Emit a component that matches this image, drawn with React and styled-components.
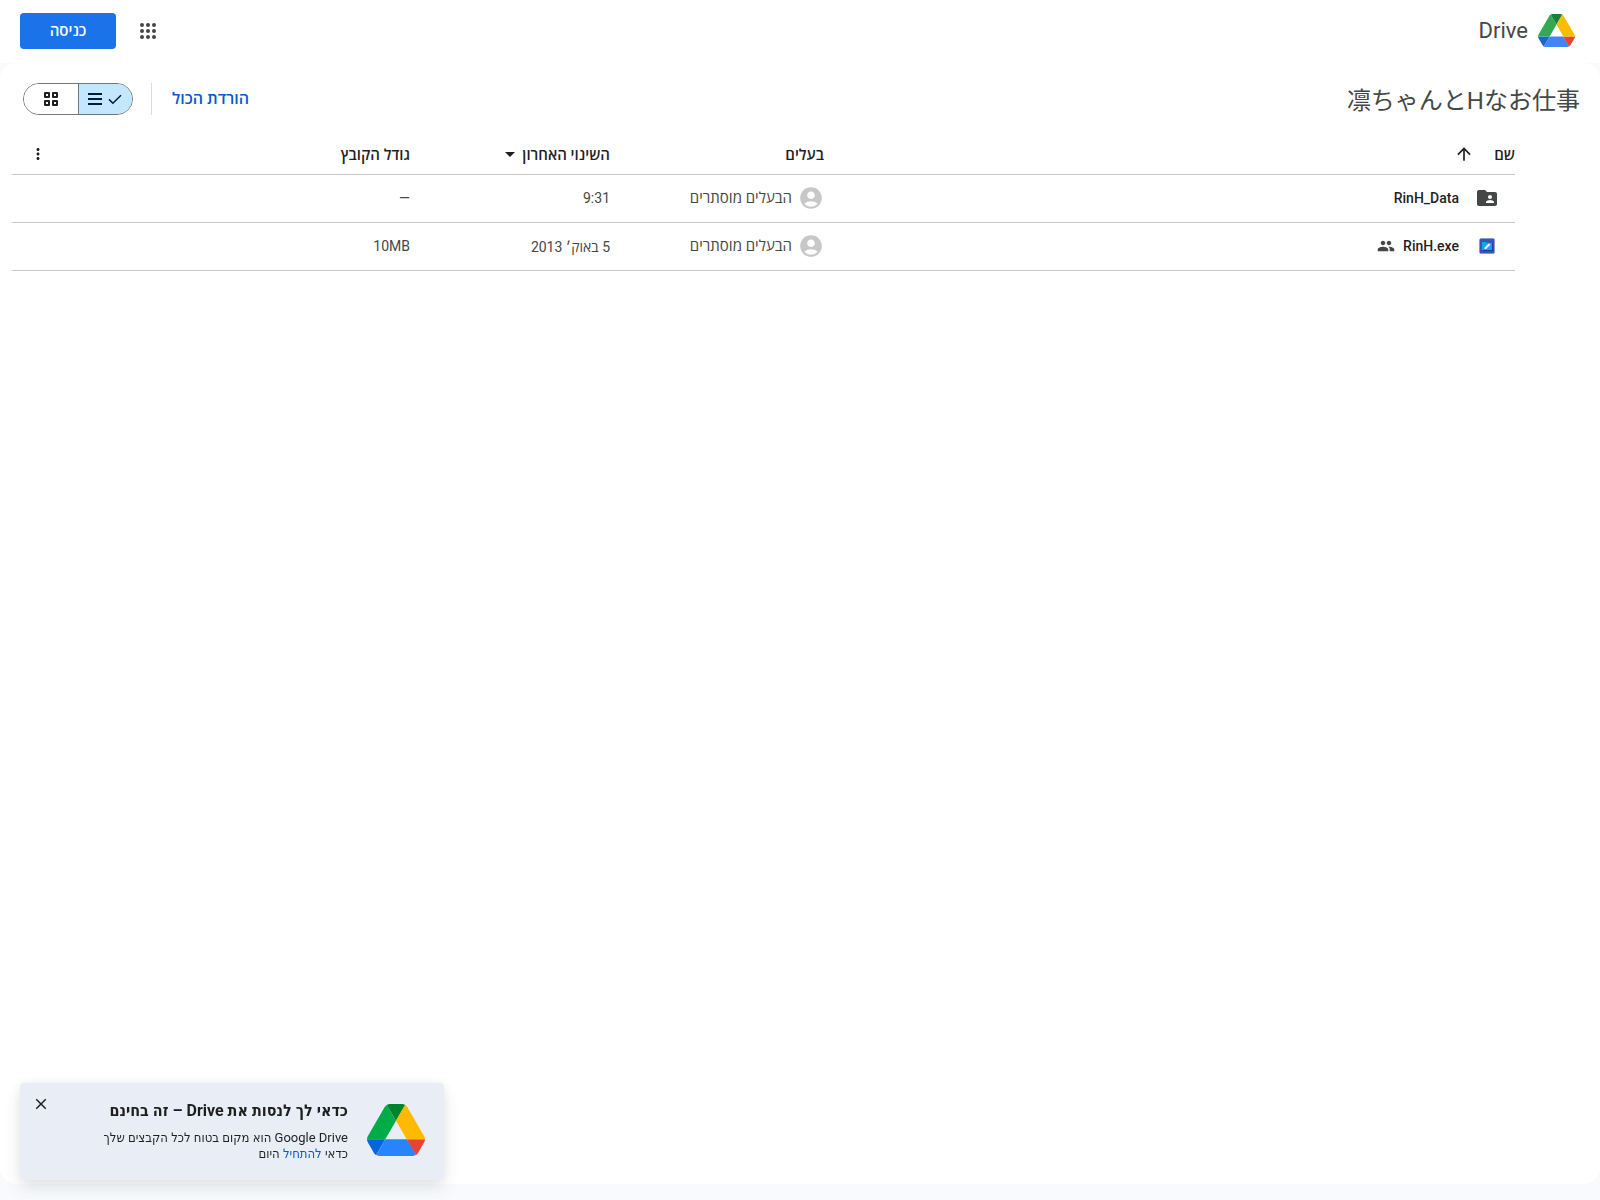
import React from 'react';
import styled, { createGlobalStyle, css } from 'styled-components';
import {
  MdAccountCircle,
  MdArrowDropDown,
  MdArrowUpward,
  MdClose,
  MdFolderShared,
  MdMoreVert,
  MdPeople,
} from 'react-icons/md';

const GlobalStyle = createGlobalStyle`
  * { box-sizing: border-box; }
  body {
    margin: 0;
    background: #f8fafd;
    color: #1f1f1f;
    font-family: Roboto, "Open Sans", "Noto Sans CJK JP", sans-serif;
  }
  button { font-family: inherit; cursor: pointer; }
  svg { display: block; flex: none; }
`;

const Page = styled.div`
  min-height: 100vh;
  display: flex;
  flex-direction: column;
  padding-bottom: 16px;
`;

const Header = styled.header`
  display: flex;
  align-items: center;
  justify-content: space-between;
  height: 63px;
  padding: 0 25px 2px 20px;
  background: #fff;
`;

const Brand = styled.a`
  display: flex;
  align-items: center;
  gap: 10px;
  color: #444746;
  font-size: 22px;
  line-height: 32px;
  text-decoration: none;
`;

const HeaderActions = styled.div`
  display: flex;
  align-items: center;
  gap: 12px;
`;

const IconButton = styled.button`
  display: flex;
  align-items: center;
  justify-content: center;
  width: ${({ $size }) => $size}px;
  height: ${({ $size }) => $size}px;
  padding: 0;
  border: 0;
  border-radius: 50%;
  background: transparent;
  color: ${({ $color }) => $color || '#1f1f1f'};
`;

const SignIn = styled.button`
  width: 96px;
  height: 36px;
  padding: 0 0 2px;
  border: 0;
  border-radius: 4px;
  background: #1a73e8;
  color: #fff;
  font-size: 15px;
  font-weight: 600;
`;

const Main = styled.main`
  flex: 1;
  border-radius: 16px;
  background: #fff;
`;

const Toolbar = styled.div`
  display: flex;
  align-items: center;
  justify-content: space-between;
  height: 72px;
  padding: 0 20px 0 23px;
`;

const Title = styled.h1`
  margin: 0;
  padding-top: 4px;
  color: #444746;
  font-size: 24px;
  font-weight: 400;
  line-height: 32px;
`;

const ToolbarActions = styled.div`
  display: flex;
  align-items: center;
`;

const DownloadAll = styled.button`
  height: 32px;
  padding: 0 20px 2px;
  border: 0;
  background: transparent;
  color: #0b57d0;
  font-size: 16px;
  font-weight: 600;
`;

const Divider = styled.span`
  width: 1px;
  height: 32px;
  margin-left: 18px;
  background: #dadce0;
`;

const Toggle = styled.div`
  display: flex;
  width: 110px;
  height: 32px;
  border: 1px solid #747775;
  border-radius: 16px;
  overflow: hidden;
`;

const ToggleButton = styled.button`
  flex: 1;
  display: flex;
  align-items: center;
  justify-content: center;
  gap: 6px;
  padding: 0;
  border: 0;
  background: #fff;
  color: #1f1f1f;
  ${({ $selected }) =>
    $selected &&
    css`
      border-left: 1px solid #747775;
      background: #c2e7ff;
      color: #001d35;
    `}
`;

const TableArea = styled.div`
  padding: 0 85px 0 12px;
`;

const Table = styled.table`
  width: 100%;
  border-collapse: collapse;
  table-layout: fixed;
`;

const Row = styled.tr`
  height: ${({ $head }) => ($head ? 39 : 48)}px;
  border-bottom: 1px solid #c7c7c7;
`;

const HeadCell = styled.th`
  width: ${({ $width }) => ($width ? `${$width}px` : 'auto')};
  padding: 0;
  font-size: 15px;
  font-weight: 600;
  text-align: right;
`;

const Cell = styled.td`
  padding: 0;
  color: #444746;
  font-size: 14px;
  text-align: right;
`;

const Inline = styled.div`
  display: flex;
  align-items: center;
  gap: ${({ $gap }) => $gap}px;
  padding-right: ${({ $start }) => $start || 0}px;
`;

const MenuSlot = styled.div`
  display: flex;
  justify-content: flex-end;
  padding-left: 14px;
`;

const FileName = styled.span`
  color: #1f1f1f;
  font-weight: 500;
`;

const OwnerName = styled.span`
  font-size: 15px;
  line-height: 20px;
`;

const FileIcon = styled.span`
  display: flex;
  align-items: center;
  justify-content: center;
  width: 24px;
  margin-left: 8px;
`;

const Promo = styled.aside`
  position: fixed;
  left: 20px;
  bottom: 20px;
  display: flex;
  align-items: flex-start;
  width: 424px;
  height: 97px;
  padding: 18px 19px 0 10px;
  border-radius: 4px;
  background: #e9eef6;
  box-shadow: 0 8px 16px rgba(60, 64, 67, 0.12), 0 0 12px rgba(60, 64, 67, 0.06);
  font-family: Roboto, "DejaVu Sans Condensed", "DejaVu Sans", sans-serif;
`;

const PromoLogo = styled.div`
  padding-top: 3px;
  margin-left: 19px;
`;

const PromoBody = styled.div`
  flex: 1;
`;

const PromoTitle = styled.h2`
  margin: 0 0 9px;
  font-size: 16px;
  font-weight: 700;
  line-height: 20px;
`;

const PromoText = styled.p`
  margin: 0;
  font-size: 13px;
  line-height: 16px;
`;

const PromoLink = styled.a`
  color: #0b57d0;
  text-decoration: none;
`;

const PromoClose = styled.div`
  align-self: flex-start;
  margin-top: -8px;
`;

const brandColors = ['#1967d2', '#34a853', '#ea4335', '#188038', '#4285f4', '#fbbc04'];
const productColors = ['#0066da', '#00ac47', '#ea4335', '#00832d', '#2684fc', '#ffba00'];

const drivePaths = [
  'm6.6 66.85 3.85 6.65c.8 1.4 1.95 2.5 3.3 3.3l13.75-23.8h-27.5c0 1.55.4 3.1 1.2 4.5z',
  'm43.65 25-13.75-23.8c-1.35.8-2.5 1.9-3.3 3.3l-25.4 44a9.06 9.06 0 0 0-1.2 4.5h27.5z',
  'm73.55 76.8c1.35-.8 2.5-1.9 3.3-3.3l1.6-2.75 7.65-13.25c.8-1.4 1.2-2.95 1.2-4.5h-27.5l5.85 11.5z',
  'm43.65 25 13.75-23.8c-1.35-.8-2.9-1.2-4.5-1.2h-18.5c-1.6 0-3.15.45-4.5 1.2z',
  'm59.8 53h-32.3l-13.75 23.8c1.35.8 2.9 1.2 4.5 1.2h50.8c1.6 0 3.15-.45 4.5-1.2z',
  'm73.4 26.5-12.7-22c-.8-1.4-1.95-2.5-3.3-3.3l-13.75 23.8 16.15 28h27.45c0-1.55-.4-3.1-1.2-4.5z',
];

function DriveLogo({ width, height, colors }) {
  return (
    <svg width={width} height={height} viewBox="0 0 87.3 78" aria-hidden="true">
      {drivePaths.map((d, i) => (
        <path key={d} d={d} fill={colors[i]} />
      ))}
    </svg>
  );
}

function AppsIcon() {
  const steps = [6, 12, 18];
  return (
    <svg width="24" height="24" viewBox="0 0 24 24" fill="currentColor" aria-hidden="true">
      {steps.map((y) => steps.map((x) => <circle key={`${x}-${y}`} cx={x} cy={y} r="2" />))}
    </svg>
  );
}

function CheckIcon() {
  return (
    <svg width="14" height="14" viewBox="0 0 14 14" fill="none" stroke="currentColor" strokeWidth="1.5" aria-hidden="true">
      <path d="M1 7.4 4.9 11.3 13 3.2" />
    </svg>
  );
}

function ListIcon() {
  return (
    <svg width="14" height="14" viewBox="0 0 14 14" fill="currentColor" aria-hidden="true">
      <path d="M0 1h14v2H0zM0 6h14v2H0zM0 11h14v2H0z" />
    </svg>
  );
}

function GridIcon() {
  return (
    <svg width="14" height="14" viewBox="0 0 14 14" fill="none" stroke="currentColor" strokeWidth="2" strokeLinejoin="round" aria-hidden="true">
      <path d="M1 1h4v4H1zM9 1h4v4H9zM1 9h4v4H1zM9 9h4v4H9z" />
    </svg>
  );
}

function ExeIcon() {
  return (
    <svg width="16" height="16" viewBox="0 0 16 16" aria-hidden="true">
      <rect x=".5" y=".5" width="15" height="15" rx="1.5" fill="#3f51b5" stroke="#7986cb" strokeWidth=".5" />
      <path d="m13 5 1 1v7H4l-1-1h10z" fill="#283593" />
      <path d="M3 4h4l1 1h5v7H3z" fill="#03a9f4" />
      <path d="m5.4 11.2.3-1.7 4.2-4.2 1.4 1.4-4.2 4.2z" fill="#fff" />
    </svg>
  );
}

const files = [
  { name: 'RinH_Data', folder: true, modified: '9:31', size: '—' },
  { name: 'RinH.exe', shared: true, modified: '5 באוק׳ 2013', size: '10MB' },
];

export default function App() {
  return (
    <>
      <GlobalStyle />
      <Page dir="rtl" lang="he">
        <Header>
          <Brand href="#">
            <DriveLogo width={37} height={33} colors={brandColors} />
            Drive
          </Brand>
          <HeaderActions>
            <IconButton type="button" $size={40} $color="#444746" aria-label="אפליקציות">
              <AppsIcon />
            </IconButton>
            <SignIn type="button">כניסה</SignIn>
          </HeaderActions>
        </Header>
        <Main>
          <Toolbar>
            <Title lang="ja">凛ちゃんとHなお仕事</Title>
            <ToolbarActions>
              <DownloadAll type="button">הורדת הכול</DownloadAll>
              <Divider />
              <Toggle>
                <ToggleButton type="button" $selected aria-pressed="true" aria-label="רשימה">
                  <CheckIcon />
                  <ListIcon />
                </ToggleButton>
                <ToggleButton type="button" aria-pressed="false" aria-label="רשת">
                  <GridIcon />
                </ToggleButton>
              </Toggle>
            </ToolbarActions>
          </Toolbar>
          <TableArea>
            <Table>
              <thead>
                <Row $head>
                  <HeadCell scope="col">
                    <Inline $gap={20}>
                      שם
                      <MdArrowUpward size={20} />
                    </Inline>
                  </HeadCell>
                  <HeadCell scope="col" $width={214}>בעלים</HeadCell>
                  <HeadCell scope="col" $width={200}>
                    <Inline $gap={0}>
                      השינוי האחרון
                      <MdArrowDropDown size={24} />
                    </Inline>
                  </HeadCell>
                  <HeadCell scope="col" $width={298}>גודל הקובץ</HeadCell>
                  <HeadCell scope="col" $width={100}>
                    <MenuSlot>
                      <IconButton type="button" $size={24} aria-label="פעולות נוספות">
                        <MdMoreVert size={18} />
                      </IconButton>
                    </MenuSlot>
                  </HeadCell>
                </Row>
              </thead>
              <tbody>
                {files.map((file) => (
                  <Row key={file.name}>
                    <Cell>
                      <Inline $gap={8} $start={16}>
                        <FileIcon>
                          {file.folder ? <MdFolderShared size={24} color="#444746" /> : <ExeIcon />}
                        </FileIcon>
                        <FileName>{file.name}</FileName>
                        {file.shared && <MdPeople size={18} color="#444746" />}
                      </Inline>
                    </Cell>
                    <Cell>
                      <Inline $gap={6}>
                        <MdAccountCircle size={26} color="#c7c7c7" />
                        <OwnerName>הבעלים מוסתרים</OwnerName>
                      </Inline>
                    </Cell>
                    <Cell>{file.modified}</Cell>
                    <Cell>{file.size}</Cell>
                    <Cell />
                  </Row>
                ))}
              </tbody>
            </Table>
          </TableArea>
        </Main>
        <Promo>
          <PromoLogo>
            <DriveLogo width={58} height={52} colors={productColors} />
          </PromoLogo>
          <PromoBody>
            <PromoTitle>כדאי לך לנסות את Drive – זה בחינם</PromoTitle>
            <PromoText>
              Google Drive הוא מקום בטוח לכל הקבצים שלך
              <br />
              כדאי <PromoLink href="#">להתחיל</PromoLink> היום
            </PromoText>
          </PromoBody>
          <PromoClose>
            <IconButton type="button" $size={22} aria-label="סגירה">
              <MdClose size={18} />
            </IconButton>
          </PromoClose>
        </Promo>
      </Page>
    </>
  );
}
